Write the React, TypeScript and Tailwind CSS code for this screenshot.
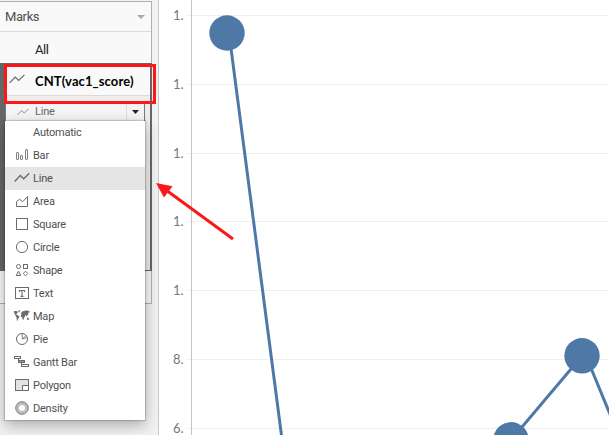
import type { ReactNode } from "react";

const G = "#6b6b6b";

function ZigZag({ className = "" }: { className?: string }) {
  return (
    <svg className={className} viewBox="0 0 16 10" fill="none" stroke={G} strokeWidth="1.2">
      <path d="M.7 8.8 6.2 3 9.7 6.5 15.4 .8" />
    </svg>
  );
}

const icons: Record<string, ReactNode> = {
  Bar: (
    <g stroke="#808080">
      <rect x="3.5" y="5.5" width="2" height="7" rx=".5" />
      <rect x="7.5" y="8.5" width="2" height="4" rx=".5" />
      <rect x="12.5" y="2.5" width="2" height="10" rx=".5" />
    </g>
  ),
  Line: <path d="M1.7 11.5 7.3 5.5l3.4 3.3 5.6-5.6" strokeWidth="1.3" />,
  Area: <path d="M3.5 13.5V8.7L6.6 6.3l3.2 2.4 4.7-5.2v10z" />,
  Square: <rect x="3.5" y="2.5" width="11" height="11" />,
  Circle: <circle cx="9" cy="8" r="5.6" />,
  Shape: (
    <g>
      <circle cx="5.5" cy="4.5" r="2" />
      <rect x="10.5" y="2.5" width="4" height="4" />
      <path d="M5.5 9.2 7.8 13.5H3.2zM12.5 9.2l2.3 2.3-2.3 2.3-2.3-2.3z" />
    </g>
  ),
  Text: (
    <g>
      <rect x="2.5" y="2.5" width="13" height="11" />
      <path d="M6.5 7V5.5h5V7M9 5.5v5.8M7.5 11.4h3" strokeWidth="1.1" />
    </g>
  ),
  Map: (
    <g fill={G} stroke="none">
      <path d="M.5 3.2 2.6 3l1.6.2L5 4l-1 1.2L3.3 6l.4.7L5 7.4l1.4.8-.5 1.6-1 1.2-.2 2-.8-.8-.3-2.6-.9-1.4-.2-1.2L1.5 6l-.3-1.8zM5.3 2.5l2-.2L6.7 4l-.9.4z" />
      <path d="M8.4 4.6 9.8 3l1.4.2.9-.7 2 .1 2.7.8-.6 1-.7.2-.3 2-1 1-.7 1-.6-1.3-.7-.6-.2 1.7-.8 1-.6 2.2-.8.3-.5-2.4-1.3-.7-.1-1.7.9-.9-.8-.3zM14.2 9.8l1.4.2.7 1.3-1 .8-1.4-.6z" />
    </g>
  ),
  Pie: (
    <g>
      <circle cx="9" cy="8" r="5.5" />
      <path d="M9.3 3V8l3.9-3.5M9.3 8l4.7-1.4" strokeWidth=".8" />
    </g>
  ),
  Gantt: (
    <g>
      <rect x="1.5" y="2.5" width="6" height="2" />
      <rect x="5.5" y="6.5" width="6" height="2" fill="#999" />
      <rect x="8.5" y="10.5" width="7" height="2" />
      <path d="M5.5 4.5v2M8.5 8v3" />
    </g>
  ),
  Polygon: (
    <g>
      <rect x="2.5" y="2.5" width="13" height="11" fill="#e3e3e3" />
      <path d="M9.5 13.5v-5h6v5z" fill="#fff" />
    </g>
  ),
  Density: (
    <g>
      <circle cx="9" cy="8" r="4.7" stroke="#bdbdbd" strokeWidth="3.4" />
      <circle cx="9" cy="8" r="6.3" stroke="#777" strokeWidth=".9" />
    </g>
  ),
};

const options = [
  ["Automatic", ""],
  ["Bar", "Bar"],
  ["Line", "Line"],
  ["Area", "Area"],
  ["Square", "Square"],
  ["Circle", "Circle"],
  ["Shape", "Shape"],
  ["Text", "Text"],
  ["Map", "Map"],
  ["Pie", "Pie"],
  ["Gantt Bar", "Gantt"],
  ["Polygon", "Polygon"],
  ["Density", "Density"],
];

function MarkMenu() {
  return (
    <ul className="absolute left-[5px] top-[121px] w-[140px] bg-white shadow-[0_5px_14px_rgba(0,0,0,0.3),0_0_1px_1px_rgba(0,0,0,0.16)]">
      {options.map(([label, icon]) => (
        <li
          key={label}
          className={`flex h-[23px] items-start pt-[3px] text-[11px] leading-[18px] tracking-[-0.23px] text-[#505050] ${label === "Line" ? "bg-[#e5e5e5]" : ""}`}
        >
          {icon && (
            <svg className="ml-2 h-4 w-[18px] shrink-0" viewBox="0 0 18 16" fill="none" stroke={G} strokeWidth="1">
              {icons[icon]}
            </svg>
          )}
          <span className={icon ? "ml-[2px]" : "ml-[28px]"}>{label}</span>
        </li>
      ))}
    </ul>
  );
}

function MarksPanel() {
  return (
    <aside className="relative h-full w-[159px] shrink-0 border-r border-[#c9c9c9] bg-[#f2f2f2] pt-px">
      <div className="flex h-[303px] w-[152px] flex-col border-y border-r border-[#b0b0b0] bg-[#f9f9f9]">
        <div className="flex h-[30px] shrink-0 items-center justify-between border-b border-[#dadada] pl-[5px] pr-[6px] text-[13px] tracking-[-0.4px] text-[#505050]">
          <span>Marks</span>
          <svg className="h-1 w-2" viewBox="0 0 8 4"><path d="M0 0h8L4 4z" fill="#aaa" /></svg>
        </div>
        <div className="flex h-[31px] shrink-0 items-center pl-[35px] pt-[5px] text-[13px] tracking-[-0.4px] text-[#222]">All</div>
        <div className="-mr-px h-[208px] shrink-0 border-y border-l-[5px] border-r-2 border-[#666] bg-[#ededed]">
          <div className="flex h-8 items-center border-b border-[#dadada] bg-[#f9f9f9] pl-1 pt-1">
            <ZigZag className="mb-[6px] h-[10px] w-4" />
            <span className="ml-[10px] whitespace-nowrap font-['Lato','Liberation_Sans',sans-serif] text-[13px] font-bold tracking-[0.1px] text-black">CNT(vac1_score)</span>
          </div>
          <div className="mt-[6px] flex h-[20px] w-[140px] items-center border-x border-[#777] bg-[#f5f5f5] text-[11px] text-[#666]">
            <ZigZag className="ml-[11px] h-2 w-3 opacity-80" />
            <span className="ml-[6px] tracking-[-0.2px]">Line</span>
            <span className="ml-auto flex h-full w-[18px] items-center justify-center border-l border-[#ddd]">
              <svg className="h-1 w-[7px]" viewBox="0 0 7 4"><path d="M0 0h7L3.5 4z" fill="#222" /></svg>
            </span>
          </div>
        </div>
      </div>
      <MarkMenu />
    </aside>
  );
}

const ticks = [
  { y: 15.5, label: "1." },
  { y: 84.5, label: "1." },
  { y: 153.5, label: "1." },
  { y: 221.5, label: "1." },
  { y: 290.5, label: "1." },
  { y: 359.5, label: "8." },
  { y: 428.5, label: "6." },
];

function Chart() {
  return (
    <svg className="h-[435px] w-[450px] shrink-0" viewBox="159 0 450 435">
      {ticks.map(({ y, label }) => (
        <g key={y}>
          <path d={`M187 ${y}H609`} stroke="#f0f0f0" />
          <text x="173" y={y + 4.7} fontSize="13" fill="#777" fontFamily="Lato, Liberation Sans, sans-serif">{label}</text>
        </g>
      ))}
      <path d="M191.5 0V435" stroke="#c4c4c4" />
      <g stroke="#4e79a7" strokeWidth="3" fill="none">
        <path d="M229 33 281.7 437M511 440 582 356M586 356 619 436" />
      </g>
      <g fill="#4e79a7">
        <circle cx="227" cy="33" r="17.7" />
        <circle cx="582" cy="355.8" r="17.7" />
        <circle cx="511" cy="439.8" r="17.7" />
      </g>
    </svg>
  );
}

export default function App() {
  return (
    <main className="relative flex h-[435px] w-[609px] overflow-hidden bg-white font-['Roboto','Liberation_Sans',sans-serif]">
      <MarksPanel />
      <Chart />
      <div className="absolute left-[4px] top-[64px] h-[40px] w-[152px] border-3 border-[#fb1818]" />
      <svg className="absolute left-[150px] top-[175px] h-[75px] w-[90px]" viewBox="150 175 90 75">
        <path d="M166 190 233 239" stroke="#fb1818" strokeWidth="3" />
        <path d="M156 183 172.5 186.3 164 197.5z" fill="#fb1818" />
      </svg>
    </main>
  );
}
